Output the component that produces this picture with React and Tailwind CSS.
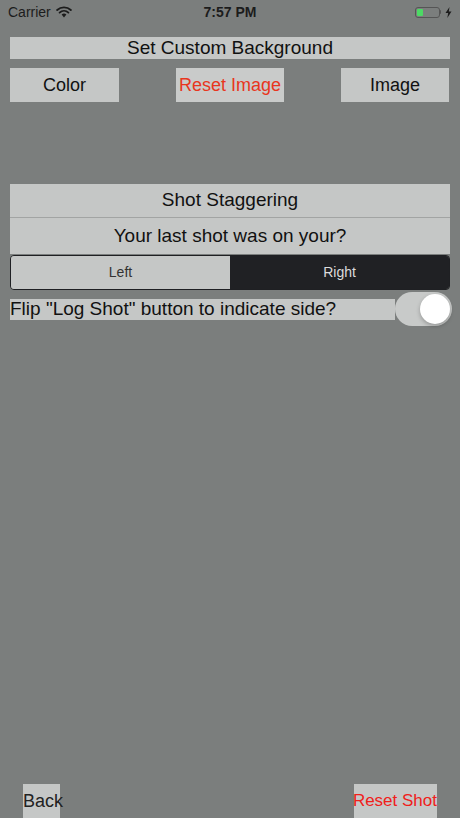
import React from "react";

const font = { fontFamily: "'Liberation Sans', Arial, sans-serif" };

function StatusBar() {
  return (
    <div className="relative flex h-[24px] items-center justify-between px-[8px] text-[14px] text-[#1c1c1c]">
      <div className="flex items-center gap-[5px]">
        <span>Carrier</span>
        <svg width="16" height="12" viewBox="0 0 16 12">
          <path d="M8 11.5 L5.6 8.6 A3.6 3.6 0 0 1 10.4 8.6 Z" fill="#1c1c1c" />
          <path d="M3.6 6.6 A6.6 6.6 0 0 1 12.4 6.6" stroke="#1c1c1c" strokeWidth="1.9" fill="none" strokeLinecap="round" />
          <path d="M1.2 4 A10 10 0 0 1 14.8 4" stroke="#1c1c1c" strokeWidth="1.9" fill="none" strokeLinecap="round" />
        </svg>
      </div>
      <span className="absolute left-1/2 -translate-x-1/2 font-bold text-[14px]">7:57 PM</span>
      <div className="flex items-center gap-[4px]">
        <div className="flex items-center">
          <div className="flex h-[11px] w-[25px] items-center rounded-[3px] border border-[#555] p-[1px]">
            <div className="h-full w-[6px] rounded-[1px] bg-[#4cd964]" />
          </div>
          <div className="h-[4px] w-[1.5px] rounded-r bg-[#555]" />
        </div>
        <svg width="7" height="11" viewBox="0 0 7 11">
          <path d="M4.5 0 L0.5 6 L3.2 6 L2.3 11 L6.5 4.6 L3.8 4.6 Z" fill="#1c1c1c" />
        </svg>
      </div>
    </div>
  );
}

export default function App() {
  return (
    <div className="flex h-[818px] w-[460px] flex-col overflow-hidden bg-[#7b7e7d]" style={font}>
      <StatusBar />

      <div className="mx-[10px] mt-[13px] flex h-[22px] items-center justify-center bg-[#c5c7c6] text-[19px] text-[#111]">
        Set Custom Background
      </div>

      <div className="mt-[9px] flex h-[34px] justify-between pl-[10px] pr-[11px] text-[18px]">
        <button className="w-[109px] bg-[#c5c7c6] text-[#111]">Color</button>
        <button className="w-[108px] bg-[#c9cbca] text-[#e8361e]">Reset Image</button>
        <button className="w-[108px] bg-[#c5c7c6] text-[#111]">Image</button>
      </div>

      <div className="mx-[10px] mt-[82px] flex h-[34px] items-center justify-center border-b border-[#a2a4a3] bg-[#c5c7c6] text-[19px] text-[#111]">
        Shot Staggering
      </div>
      <div className="mx-[10px] flex h-[36px] items-center justify-center bg-[#c5c7c6] text-[19px] text-[#111]">
        Your last shot was on your?
      </div>

      <div className="mx-[10px] mt-[1px] flex h-[35px] overflow-hidden rounded-[4px] border border-[#1f2023] text-[14px]">
        <div className="flex flex-1 items-center justify-center bg-[#c5c7c6] text-[#333]">Left</div>
        <div className="flex flex-1 items-center justify-center bg-[#202124] text-[#dcdcdc]">Right</div>
      </div>

      <div className="mt-[1px] flex h-[36px] items-center pl-[10px]">
        <div className="flex h-[21px] w-[385px] items-center bg-[#c5c7c6] text-[19px] text-[#111]">
          Flip "Log Shot" button to indicate side?
        </div>
        <div className="flex h-[34px] w-[57px] items-center justify-end rounded-full bg-[#c8cac9] p-[2px]">
          <div className="h-[30px] w-[30px] rounded-full bg-white shadow-[0_2px_4px_rgba(0,0,0,0.25)]" />
        </div>
      </div>

      <div className="mt-auto flex h-[34px] justify-between pl-[23px] pr-[23px] text-[18px]">
        <button className="w-[37px] whitespace-nowrap bg-[#c5c7c6] text-left text-[#222]">Back</button>
        <button className="flex w-[83px] items-center justify-end whitespace-nowrap bg-[#c5c7c6] text-[17px] text-[#f0201a]">
          Reset Shot
        </button>
      </div>
    </div>
  );
}
